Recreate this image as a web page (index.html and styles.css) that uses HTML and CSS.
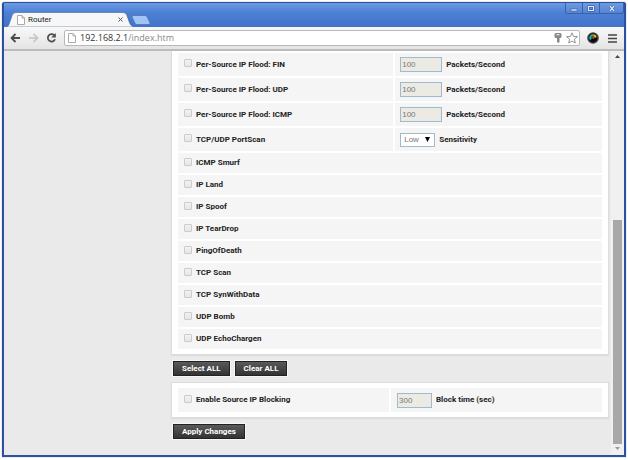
FILE: index.html
```html
<!DOCTYPE html>
<html lang="en">
<head>
    <meta charset="UTF-8">
    <meta name="viewport" content="width=device-width, initial-scale=1.0">
    <title>Router</title>
    <link rel="stylesheet" href="styles.css">
</head>
<body>
    <div class="window">
        <header class="titlebar">
            <div class="tab">
                <svg class="tab-shape" viewBox="0 0 128 16" preserveAspectRatio="none" aria-hidden="true">
                    <path d="M0 16 C3 15 3 13 4 10 L6 4 Q7 .5 10 .5 H117 Q120 .5 121 4 L123 10 C124 13 125 15 128 16Z" fill="#f7f7f7" stroke="#3d5f9c" stroke-width=".6"/>
                </svg>
                <svg class="page-icon" viewBox="0 0 8 10" aria-hidden="true">
                    <path d="M.5 .5H5L7.500 3V9.500H.5ZM5 .5V3H7.500" fill="#fff" stroke="#aaa"/>
                </svg>
                <span class="tab-title">Router</span>
                <button class="tab-close" aria-label="Close tab">
                    <svg viewBox="0 0 5 5"><path d="M.5 .5L4.500 4.500M4.500 .5L.5 4.500" stroke="#555"/></svg>
                </button>
            </div>
            <button class="new-tab" aria-label="New tab">
                <svg viewBox="0 0 20 10"><path d="M2.500 .5H14Q15.500 .5 16.200 2L19 8Q19.500 9.500 18 9.500H6Q4.500 9.500 3.800 8L1 2Q.5 .5 2.500 .5Z" fill="#a0c5f5" stroke="#4a74bb" stroke-width=".8"/></svg>
            </button>
            <div class="window-buttons">
                <button aria-label="Minimize"><svg viewBox="0 0 8 7"><rect x="1" y="4" width="6" height="2" fill="#dfe9fa" stroke="#2c4f93" stroke-width=".5"/></svg></button>
                <button aria-label="Maximize"><svg viewBox="0 0 8 7"><path d="M1.500 1.500H6.500V5.500H1.500Z" fill="none" stroke="#2c4f93" stroke-width="2.200"/><path d="M1.500 1.500H6.500V5.500H1.500Z" fill="none" stroke="#dfe9fa" stroke-width="1.200"/></svg></button>
                <button class="close" aria-label="Close"><svg viewBox="0 0 8 7"><path d="M2 1L6 6M6 1L2 6" stroke="#2c4f93" stroke-width="2.200"/><path d="M2 1L6 6M6 1L2 6" stroke="#dfe9fa" stroke-width="1.300"/></svg></button>
            </div>
        </header>

        <nav class="toolbar">
            <button aria-label="Back"><svg viewBox="0 0 11 10"><path d="M10 5H2M5.500 1L1.500 5L5.500 9" fill="none" stroke="#4d4d4d" stroke-width="1.800"/></svg></button>
            <button aria-label="Forward"><svg viewBox="0 0 11 10"><path d="M1 5H9M5.500 1L9.500 5L5.500 9" fill="none" stroke="#c4c4c4" stroke-width="1.600"/></svg></button>
            <button aria-label="Reload"><svg viewBox="0 0 11 10"><path d="M8.200 2.300A3.700 3.700 0 1 0 9 6.200" fill="none" stroke="#4d4d4d" stroke-width="1.700"/><path d="M9.800 0V4.600H5.200Z" fill="#4d4d4d"/></svg></button>
            <div class="address">
                <svg class="page-icon" viewBox="0 0 8 10" aria-hidden="true">
                    <path d="M.5 .5H5L7.500 3V9.500H.5ZM5 .5V3H7.500" fill="#fff" stroke="#aaa"/>
                </svg>
                <a class="url" href="#">192.168.2.1<span>/index.htm</span></a>
                <svg class="key" viewBox="0 0 8 10" aria-hidden="true">
                    <path fill-rule="evenodd" d="M1.500 0H6.500L7.500 1V4L6.500 5H5.500V9L4.500 10L3 9V5H1.500L.5 4V1ZM2.500 1.200V2.200H5.500V1.200Z" fill="#888"/>
                </svg>
                <svg class="star" viewBox="0 0 12 12" aria-hidden="true">
                    <path d="M6 .8L7.500 4.400L11.400 4.700L8.400 7.200L9.300 11L6 9L2.700 11L3.600 7.200L.6 4.700L4.500 4.400Z" fill="#fff" stroke="#777" stroke-width=".8"/>
                </svg>
            </div>
            <button class="extension" aria-label="Extension">
                <svg viewBox="0 0 12 12">
                    <circle cx="6" cy="6" r="5.800" fill="#444"/>
                    <circle cx="6" cy="6" r="4.400" fill="#0a0a0a"/>
                    <path d="M3.800 7.500A3 3 0 0 1 4 4" stroke="#19b5e8" stroke-width="2" fill="none"/>
                    <path d="M4 4A3 3 0 0 1 6.500 3.200" stroke="#35c44a" stroke-width="2" fill="none"/>
                    <path d="M6.500 3.200A3 3 0 0 1 8.800 5.500" stroke="#e8c61c" stroke-width="2" fill="none"/>
                    <path d="M5.500 6.200L7.200 5.200" stroke="#e33f74" stroke-width="1.600"/>
                </svg>
            </button>
            <button class="menu" aria-label="Menu"><svg viewBox="0 0 9 9"><path d="M0 1H9M0 4.500H9M0 8H9" stroke="#444" stroke-width="1.700"/></svg></button>
        </nav>

        <div class="viewport">
            <aside class="sidebar"></aside>
            <main class="content">
                <section class="card card-top">
                    <table class="options">
                        <tr>
                            <td class="name"><label><input type="checkbox"> Per-Source IP Flood: FIN</label></td>
                            <td><label><input type="text" value="100" disabled> Packets/Second</label></td>
                        </tr>
                        <tr>
                            <td class="name"><label><input type="checkbox"> Per-Source IP Flood: UDP</label></td>
                            <td><label><input type="text" value="100" disabled> Packets/Second</label></td>
                        </tr>
                        <tr>
                            <td class="name"><label><input type="checkbox"> Per-Source IP Flood: ICMP</label></td>
                            <td><label><input type="text" value="100" disabled> Packets/Second</label></td>
                        </tr>
                        <tr>
                            <td class="name"><label><input type="checkbox"> TCP/UDP PortScan</label></td>
                            <td><label><select disabled><option>Low</option></select> Sensitivity</label></td>
                        </tr>
                        <tr class="single"><td colspan="2"><label><input type="checkbox"> ICMP Smurf</label></td></tr>
                        <tr class="single"><td colspan="2"><label><input type="checkbox"> IP Land</label></td></tr>
                        <tr class="single"><td colspan="2"><label><input type="checkbox"> IP Spoof</label></td></tr>
                        <tr class="single"><td colspan="2"><label><input type="checkbox"> IP TearDrop</label></td></tr>
                        <tr class="single"><td colspan="2"><label><input type="checkbox"> PingOfDeath</label></td></tr>
                        <tr class="single"><td colspan="2"><label><input type="checkbox"> TCP Scan</label></td></tr>
                        <tr class="single"><td colspan="2"><label><input type="checkbox"> TCP SynWithData</label></td></tr>
                        <tr class="single"><td colspan="2"><label><input type="checkbox"> UDP Bomb</label></td></tr>
                        <tr class="single"><td colspan="2"><label><input type="checkbox"> UDP EchoChargen</label></td></tr>
                    </table>
                </section>
                <div class="actions">
                    <button class="btn">Select ALL</button>
                    <button class="btn">Clear ALL</button>
                </div>
                <section class="card">
                    <table class="options blocking">
                        <tr>
                            <td class="name"><label><input type="checkbox"> Enable Source IP Blocking</label></td>
                            <td><label><input type="text" value="300" disabled> Block time (sec)</label></td>
                        </tr>
                    </table>
                </section>
                <div class="actions">
                    <button class="btn">Apply Changes</button>
                </div>
            </main>
            <div class="scrollbar">
                <svg viewBox="0 0 5 3"><path d="M0 3L2.500 0L5 3Z" fill="#444"/></svg>
                <div class="track"><div class="thumb"></div></div>
                <svg viewBox="0 0 5 3"><path d="M0 0L2.500 3L5 0Z" fill="#999"/></svg>
            </div>
        </div>
    </div>
</body>
</html>
```

FILE: styles.css
```css
* {
    box-sizing: border-box;
}
body {
    margin: 0;
    height: 100vh;
    padding: 2px 2px 3px;
    background-color: #fff;
    font-family: Roboto, "Liberation Sans", Arial, sans-serif;
    font-size: 8px;
    line-height: 10px;
    color: #222;
}
button {
    margin: 0;
    padding: 0;
    border: 0;
    background: none;
    font: inherit;
}
svg {
    display: block;
}

/* Browser window */
.window {
    display: flex;
    flex-direction: column;
    height: 100%;
    border: 1px solid #2b52a0;
    border-width: 1px 2px 2px;
    border-radius: 3px 3px 0 0;
    box-shadow: 0 0 1px #445;
    background-color: #4273cb;
}
.titlebar {
    display: flex;
    align-items: flex-end;
    height: 24px;
    padding-left: 2px;
    background: linear-gradient(#6a9be2, #4d80d3 40%, #4273cb);
}
.tab {
    position: relative;
    display: flex;
    align-items: center;
    width: 128px;
    height: 15px;
    padding: 0 11px;
}
.tab-shape {
    position: absolute;
    inset: 0;
    width: 100%;
    height: 100%;
}
.page-icon {
    position: relative;
    width: 8px;
    height: 10px;
}
.tab-title {
    position: relative;
    flex: 1;
    margin-left: 3px;
}
.tab-close {
    position: relative;
    width: 5px;
    height: 5px;
}
.new-tab {
    width: 20px;
    height: 10px;
    margin: 0 0 2px -3px;
}
.window-buttons {
    display: flex;
    align-self: flex-start;
    margin-left: auto;
    border: 1px solid #3a62ac;
    border-top: 0;
    border-radius: 0 0 3px 3px;
    background: linear-gradient(#6f9be0, #5484d4);
}
.window-buttons button {
    display: flex;
    align-items: center;
    justify-content: center;
    width: 17px;
    height: 10px;
    border-right: 1px solid #3a62ac;
}
.window-buttons .close {
    width: 23px;
    border-right: 0;
}
.window-buttons svg {
    width: 8px;
    height: 7px;
}

/* Toolbar */
.toolbar {
    display: flex;
    align-items: center;
    height: 24px;
    padding: 0 7px 0 6px;
    gap: 7px;
    background: linear-gradient(#f8f8f8, #e4e4e4);
    border-bottom: 2px solid #bcbcbc;
}
.toolbar button svg {
    width: 11px;
    height: 10px;
}
.address {
    display: flex;
    flex: 1;
    align-items: center;
    height: 16px;
    padding: 0 1px 0 3px;
    border: 1px solid #b8b8b8;
    border-radius: 2px;
    background-color: #fff;
}
.url {
    flex: 1;
    margin-left: 4px;
    font-family: "Open Sans", sans-serif;
    font-size: 9px;
    line-height: 14px;
    color: #333;
    text-decoration: none;
}
.url span {
    color: #888;
}
.key {
    width: 8px;
    height: 10px;
}
.star {
    width: 12px;
    height: 12px;
    margin-left: 4px;
}
.toolbar .extension svg {
    width: 12px;
    height: 12px;
}
.toolbar .menu {
    margin-left: 2px;
}
.toolbar .menu svg {
    width: 9px;
    height: 9px;
}

/* Page */
.viewport {
    display: flex;
    flex: 1;
    min-height: 0;
    background-color: #eaeaea;
    overflow: hidden;
}
.sidebar {
    width: 167px;
}
.content {
    flex: 1;
}
.card {
    padding: 3px 4px;
    border: 1px solid #dcdcdc;
    background-color: #fff;
    box-shadow: 0 1px 1px #ddd;
}
.card-top {
    padding-top: 0;
    border-top: 0;
}
.options {
    width: 100%;
    border-spacing: 2px;
    table-layout: fixed;
    font-weight: bold;
}
.options td {
    height: 23px;
    padding: 0 6px;
    background-color: #f5f5f5;
    white-space: nowrap;
}
.options .name {
    width: 51%;
}
.options .name + td {
    padding-left: 5px;
}
.options .single td {
    height: 20px;
}
.options label {
    display: flex;
    align-items: center;
    gap: 4px;
}
.options input[type="checkbox"] {
    appearance: none;
    width: 8px;
    height: 8px;
    margin: 0 0 3px;
    border: 1px solid #ccc;
    border-radius: 1px;
    background: linear-gradient(#f2f2f2, #e6e6e6);
}
.options input[type="text"] {
    width: 42px;
    height: 15px;
    margin: 0;
    padding: 0 1px;
    border: 1px solid #9fb9cd;
    background-color: #ebebe4;
    font: 8px "Liberation Sans", Arial, sans-serif;
    color: #777;
}
.options select {
    appearance: none;
    width: 35px;
    height: 14px;
    padding: 0 3px;
    border: 1px solid #9fb9cd;
    border-radius: 0;
    background: #fff url("data:image/svg+xml,%3Csvg xmlns='http://www.w3.org/2000/svg' viewBox='0 0 5 5'%3E%3Cpath d='M0 0H5L2.500 5Z'/%3E%3C/svg%3E") no-repeat right 4px center / 5px 5px;
    font: 8px "Liberation Sans", Arial, sans-serif;
    color: #777;
    opacity: 1;
}
.blocking td {
    height: 24px;
}
.options.blocking .name {
    width: 50%;
}
.options.blocking .name + td {
    padding-left: 6px;
}
.options.blocking input[type="text"] {
    width: 35px;
}
.actions {
    display: flex;
    gap: 5px;
    padding: 6px 2px;
}
.btn {
    height: 15px;
    padding: 0 8px;
    border: 1px solid #222;
    background: linear-gradient(#5a5a5a, #333);
    box-shadow: 0 0 0 1px #f6f6f6;
    font-weight: bold;
    color: #fff;
}

/* Scrollbar */
.scrollbar {
    display: flex;
    flex-direction: column;
    align-items: center;
    width: 13px;
    margin-left: 2px;
    padding: 4px 1px 5px 0;
    background-color: #f0f0f0;
}
.scrollbar svg {
    width: 5px;
    height: 3px;
}
.track {
    display: flex;
    flex: 1;
    flex-direction: column;
    justify-content: flex-end;
    padding-bottom: 3px;
}
.thumb {
    width: 9px;
    height: 58%;
    background-color: #a8a8a8;
}
```
